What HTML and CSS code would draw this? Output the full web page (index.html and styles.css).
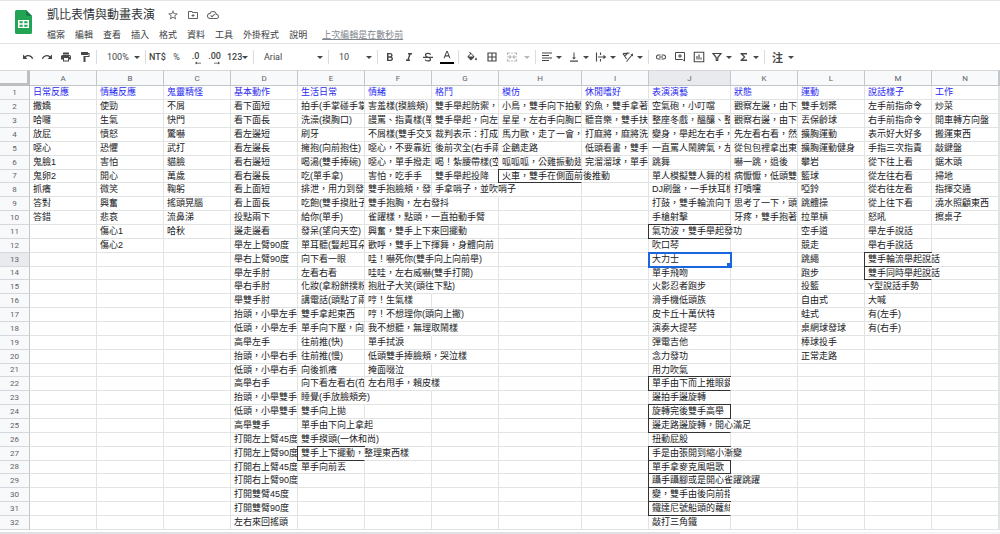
FILE: index.html
```html
<!DOCTYPE html>
<html lang="zh-Hant">
<head>
<meta charset="utf-8">
<title>凱比表情與動畫表演</title>
<link rel="stylesheet" href="styles.css">
</head>
<body>
<svg class="defs" aria-hidden="true">
  <symbol id="arrow" viewBox="0 0 6 3"><path d="M0 0h6L3 3z"/></symbol>
</svg>
<header class="header">
  <svg class="logo" viewBox="0 0 17 24" aria-label="試算表">
    <path fill="#23a455" d="M1.500 0H11l6 6v16.500a1.500 1.500 0 0 1-1.500 1.500h-14A1.500 1.500 0 0 1 0 22.500v-21A1.500 1.500 0 0 1 1.500 0z"/>
    <path fill="#158043" d="M11 0l6 6h-4.500A1.500 1.500 0 0 1 11 4.500z"/>
    <path fill="#fff" fill-rule="evenodd" d="M3 10h11v8H3zM4.500 11.300v1.900h3.200v-1.900zM9.200 11.300v1.900h3.300v-1.900zM4.500 14.700v2h3.200v-2zM9.200 14.700v2h3.300v-2z"/>
  </svg>
  <div class="heading">
    <div class="title-row">
      <h1 class="title">凱比表情與動畫表演</h1>
      <button class="title-btn" aria-label="加上星號"><svg viewBox="0 0 24 24"><path d="M22 9.240l-7.190-.620L12 2 9.190 8.630 2 9.240l5.460 4.730L5.820 21 12 17.270 18.180 21l-1.630-7.030zM12 15.400l-3.760 2.270 1-4.280-3.320-2.880 4.380-.380L12 6.100l1.710 4.040 4.380.380-3.320 2.880 1 4.280z"/></svg></button>
      <button class="title-btn" aria-label="移動"><svg viewBox="0 0 24 24"><path d="M20 6h-8l-2-2H4c-1.100 0-2 .900-2 2v12c0 1.100.900 2 2 2h16c1.100 0 2-.900 2-2V8c0-1.100-.900-2-2-2zm0 12H4V6h5.200l2 2H20zM11 16h2v-2h2v-2h-2v-2h-2v2H9v2h2z"/></svg></button>
      <button class="title-btn" aria-label="文件狀態"><svg viewBox="0 0 24 24"><path d="M19.350 10.040A7.490 7.490 0 0 0 12 4C9.110 4 6.600 5.640 5.350 8.040A5.994 5.994 0 0 0 0 14c0 3.310 2.690 6 6 6h13c2.760 0 5-2.240 5-5 0-2.640-2.050-4.780-4.650-4.960zM19 18H6c-2.210 0-4-1.790-4-4s1.790-4 4-4h.700A5.500 5.500 0 0 1 17.500 11.500v.500H19c1.660 0 3 1.340 3 3s-1.340 3-3 3zm-9-3.820l-2.090-2.090L6.500 13.500 10 17l6-6-1.400-1.400z"/></svg></button>
    </div>
    <nav class="menu">
      <button>檔案</button><button>編輯</button><button>查看</button><button>插入</button><button>格式</button><button>資料</button><button>工具</button><button>外掛程式</button><button>說明</button>
      <a class="last-edit" href="#history">上次編輯是在數秒前</a>
    </nav>
  </div>
</header>
<div class="toolbar" role="toolbar">
  <button class="tool" aria-label="復原"><svg viewBox="0 0 24 24"><path d="M12.500 8c-2.650 0-5.050.990-6.900 2.600L2 7v9h9l-3.620-3.620A7.980 7.980 0 0 1 20.120 16l2.370-.780A10.500 10.500 0 0 0 12.500 8z"/></svg></button>
  <button class="tool" aria-label="重做"><svg viewBox="0 0 24 24"><path d="M18.400 10.600A10.480 10.480 0 0 0 1.510 15.220L3.880 16a8 8 0 0 1 12.740-3.620L13 16h9V7z"/></svg></button>
  <button class="tool" aria-label="列印"><svg viewBox="0 0 24 24"><path fill-rule="evenodd" d="M19 8H5a3 3 0 0 0-3 3v6h4v4h12v-4h4v-6a3 3 0 0 0-3-3zm-3 11H8v-5h8zM19 12a1 1 0 1 1 0-2 1 1 0 0 1 0 2zM18 3H6v4h12z"/></svg></button>
  <button class="tool" aria-label="複製格式"><svg viewBox="0 0 24 24"><path d="M18 4V3a1 1 0 0 0-1-1H5a1 1 0 0 0-1 1v4a1 1 0 0 0 1 1h12a1 1 0 0 0 1-1V6h1v4H9v11a1 1 0 0 0 1 1h2a1 1 0 0 0 1-1v-9h8V4z"/></svg></button>
  <span class="sep"></span>
  <label class="picker"><select aria-label="縮放"><option>100%</option></select><svg class="arrow"><use href="#arrow"/></svg></label>
  <span class="sep"></span>
  <button class="tool strong">NT$</button>
  <button class="tool">%</button>
  <button class="tool strong dec" aria-label="減少小數位數">.0<svg viewBox="0 0 8 4"><path d="M2.500 0v1.500H8v1H2.500V4L0 2z"/></svg></button>
  <button class="tool strong dec" aria-label="增加小數位數">.00<svg viewBox="0 0 8 4"><path d="M5.500 0v1.500H0v1h5.500V4L8 2z"/></svg></button>
  <button class="tool drop strong">123<svg class="arrow"><use href="#arrow"/></svg></button>
  <span class="sep"></span>
  <label class="picker font"><select aria-label="字型"><option>Arial</option></select><svg class="arrow"><use href="#arrow"/></svg></label>
  <span class="sep"></span>
  <label class="picker"><select aria-label="字型大小"><option>10</option></select><svg class="arrow"><use href="#arrow"/></svg></label>
  <span class="sep"></span>
  <button class="tool" aria-label="粗體"><svg viewBox="0 0 24 24"><path fill-rule="evenodd" d="M15.600 11.800c1-.700 1.650-1.800 1.650-2.800C17.250 6.740 15.500 4 12.500 4H6v16h7.600c2.600 0 4.400-2 4.400-4.300 0-1.700-1-3.200-2.400-3.900zM9 6.500h3.500a1.700 1.700 0 0 1 0 3.800H9zm4 11H9v-4.200h4a2.100 2.100 0 0 1 0 4.200z"/></svg></button>
  <button class="tool" aria-label="斜體"><svg viewBox="0 0 24 24"><path d="M10 4v3h2.210l-3.420 10H6v3h8v-3h-2.210l3.420-10H18V4z"/></svg></button>
  <button class="tool" aria-label="刪除線"><svg viewBox="0 0 24 24"><path fill="none" stroke="currentColor" stroke-width="2.500" d="M2 12.500h20M17 7.500C16.500 3.500 7 3.500 7 8c0 2 2 3.500 5 4.500 3 .800 5 1.800 5 4 0 4.500-10 4.500-10.500.500"/></svg></button>
  <button class="tool color" aria-label="文字顏色"><svg viewBox="0 0 24 24"><path fill-rule="evenodd" d="M10.600 2L4.500 18H7l1.500-4h7l1.500 4h2.500L13.400 2zM9.300 11.700L12 4.500l2.700 7.200z"/></svg></button>
  <span class="sep"></span>
  <button class="tool fill" aria-label="填滿顏色"><svg viewBox="0 0 24 24"><path fill-rule="evenodd" d="M15.500 9.500L7.600 1.600 6.200 3l2.400 2.400-5.200 5.100a1.500 1.500 0 0 0 0 2.100l5.500 5.500a1.500 1.500 0 0 0 2.100 0l5.500-5.500c.600-.600.600-1.500-1-3.100zM5.200 11L10 6.200l4.800 4.800zM20 13s-2 2.200-2 3.500a2 2 0 0 0 4 0C22 15.200 20 13 20 13z"/></svg></button>
  <button class="tool" aria-label="框線"><svg viewBox="0 0 24 24"><path fill="none" stroke="currentColor" stroke-width="2.300" d="M4 4h16v16H4zM12 4v16M4 12h16"/></svg></button>
  <button class="tool drop merge" aria-label="合併儲存格" disabled><svg viewBox="0 0 24 24"><path fill="none" stroke="currentColor" stroke-width="2.300" d="M3 8V4h5M10 4h4M16 4h5v4M3 16v4h5M10 20h4M16 20h5v-4M2 12h7M22 12h-7M7 9l3 3-3 3M17 9l-3 3 3 3"/></svg><svg class="arrow"><use href="#arrow"/></svg></button>
  <span class="sep"></span>
  <button class="tool drop" aria-label="水平對齊"><svg viewBox="0 0 24 24"><path fill="none" stroke="currentColor" stroke-width="2.200" d="M2 4h20M2 9h14M2 14h20M2 19h14"/></svg><svg class="arrow"><use href="#arrow"/></svg></button>
  <button class="tool drop" aria-label="垂直對齊"><svg viewBox="0 0 24 24"><path d="M16 13h-3V3h-2v10H8l4 4zM4 19v2.300h16V19z"/></svg><svg class="arrow"><use href="#arrow"/></svg></button>
  <button class="tool drop" aria-label="文字換行"><svg viewBox="0 0 24 24"><path fill="none" stroke="currentColor" stroke-width="2.200" d="M3 3v18M11 3v5M11 16v5M6 12h13"/><path d="M17 7.500l5.500 4.500-5.500 4.500z"/></svg><svg class="arrow"><use href="#arrow"/></svg></button>
  <button class="tool drop" aria-label="文字旋轉"><svg viewBox="0 0 24 24"><path fill="none" stroke="currentColor" stroke-width="2.200" d="M2 5l13-1M2 5l7 11M5 10l7-6M9 21L20 8"/><path d="M22 5v6l-5-4z"/></svg><svg class="arrow"><use href="#arrow"/></svg></button>
  <span class="sep"></span>
  <button class="tool" aria-label="插入連結"><svg viewBox="0 0 24 24"><path d="M3.900 12A3.100 3.100 0 0 1 7 8.900h4V7H7a5 5 0 0 0 0 10h4v-1.900H7A3.100 3.100 0 0 1 3.900 12zM8 13h8v-2H8zm9-6h-4v1.900h4a3.100 3.100 0 0 1 0 6.200h-4V17h4a5 5 0 0 0 0-10z"/></svg></button>
  <button class="tool" aria-label="插入註解"><svg viewBox="0 0 24 24"><path fill="none" stroke="currentColor" stroke-width="2" d="M3 3h18v17l-4-3H3zM12 6v8M8 10h8"/></svg></button>
  <button class="tool" aria-label="插入圖表"><svg viewBox="0 0 24 24"><path fill="none" stroke="currentColor" stroke-width="2.200" d="M2.500 2.500h19v19h-19zM8 10v7M12 7v10M16 13v4"/></svg></button>
  <button class="tool drop" aria-label="篩選器"><svg viewBox="0 0 24 24"><path fill="none" stroke="currentColor" stroke-width="2.400" d="M4 5h16l-6.500 8v6h-3v-6z"/></svg><svg class="arrow"><use href="#arrow"/></svg></button>
  <button class="tool drop" aria-label="函式"><svg viewBox="0 0 24 24"><path d="M18 4H5v2l6.500 6L5 18v2h13v-3h-8l5-5-5-5h8z"/></svg><svg class="arrow"><use href="#arrow"/></svg></button>
  <span class="sep"></span>
  <button class="tool drop ime">注<svg class="arrow"><use href="#arrow"/></svg></button>
</div>
<main class="sheet">
  <table class="grid" id="grid"></table>
  <div class="scrollbar"><div class="thumb"></div></div>
</main>
<script src="sheet.js"></script>
</body>
</html>
```

FILE: styles.css
```css
* { box-sizing: border-box; }

body {
  margin: 0;
  min-height: 100vh;
  overflow: hidden;
  background: #fff;
  color: #3c4043;
  font-family: "Liberation Sans", "Noto Sans CJK TC", sans-serif;
  font-size: 9px;
}

button, select {
  margin: 0;
  padding: 0;
  border: 0;
  background: none;
  color: inherit;
  font: inherit;
}

svg { display: block; fill: currentColor; }
.defs { display: none; }

.header {
  display: flex;
  gap: 15px;
  padding: 6px 15px 1px;
  border-top: 1px solid #e3e4e6;
  border-bottom: 1px solid #e0e2e5;
}
.logo { width: 17px; height: 24px; margin-top: 3px; }
.title-row { display: flex; align-items: center; gap: 8px; height: 16px; }
.title {
  margin: 0 4px 0 0;
  font-size: 12px;
  font-weight: 400;
  line-height: 16px;
  color: #303336;
}
.title-btn { width: 12px; height: 12px; color: #5f6368; }
.title-btn svg { width: 12px; height: 12px; }
.menu { display: flex; gap: 10px; margin-top: 5px; line-height: 14px; white-space: nowrap; }
.last-edit { margin-left: 5px; color: #80868b; }

.toolbar {
  display: flex;
  align-items: center;
  height: 26px;
  padding-left: 18px;
  color: #444746;
  font-family: Roboto, "Noto Sans CJK TC", sans-serif;
  white-space: nowrap;
}
.sep { flex: none; width: 1px; height: 14px; margin: 0 2px; background: #dadce0; }
.tool {
  flex: none;
  display: flex;
  align-items: center;
  justify-content: center;
  width: 19px;
  height: 20px;
}
.tool svg { width: 12px; height: 12px; }
.tool .arrow, .arrow { flex: none; width: 6px; height: 3px; }
.strong { font-weight: 500; }
.dec { flex-direction: column; align-items: center; line-height: 9px; padding-top: 3px; }
.dec svg { width: 6px; height: 4px; align-self: flex-end; margin-right: 4px; }
.drop { justify-content: space-between; width: 27px; padding: 0 3px; }
.merge { width: 32px; padding-left: 5px; color: #b4b7ba; }
.color svg { padding-bottom: 1px; border-bottom: 0; }
.color { flex-direction: column; }
.color::after { content: ""; width: 14px; height: 2px; background: #000; }
.fill { width: 21px; }
.ime { width: 30px; padding-left: 5px; font-size: 11px; font-weight: 700; }
.picker { flex: none; display: flex; align-items: center; width: 44px; padding: 0 3px 0 8px; }
.picker select { flex: 1; min-width: 0; appearance: none; outline: 0; }
.font { width: 70px; }

.grid {
  width: 100%;
  table-layout: fixed;
  border-collapse: separate;
  border-spacing: 0;
  line-height: 13px;
  white-space: nowrap;
  color: #202124;
}
.col { width: 67px; }
.col-head { width: 30px; }
.col-h { width: 83px; }
.col-j { width: 82px; }
.col-rest { width: auto; }

.grid th {
  padding: 0;
  border-right: 1px solid #c4c7c9;
  border-bottom: 1px solid #d5d7da;
  background: #f8f9fa;
  color: #5f6368;
  font-family: Roboto, sans-serif;
  font-size: 8px;
  font-weight: 400;
  text-align: center;
}
.grid thead th { height: 16px; border-top: 1px solid #d5d7da; border-bottom-color: #c4c7c9; }
.grid thead .corner { border-right: 3px solid #bcbec0; border-bottom: 3px solid #bcbec0; }
.grid .active { background: #e8eaed; }
.grid tbody tr { height: 14px; }
.grid tbody tr:nth-child(7n) { height: 13px; line-height: 12px; }
.grid td {
  padding: 0 0 0 3px;
  border-right: 1px solid #e2e3e3;
  border-bottom: 1px solid #e2e3e3;
}
.grid tbody tr:first-child td { color: #2a2af0; }
.grid .clip { overflow: hidden; }
.grid .open { border-right-color: transparent; }
.grid .boxed { border-bottom-color: #333; box-shadow: -1px 0 #333, 0 -1px #333, -1px -1px #333; }
.grid .closed { border-right-color: #333; }
.grid .selected { position: relative; outline: 2px solid #1a66e0; outline-offset: -1px; }
.grid .selected::after {
  content: "";
  position: absolute;
  right: -2px;
  bottom: -2px;
  width: 5px;
  height: 5px;
  background: #1a66e0;
}

.scrollbar { margin-top: 2px; height: 4px; background: #f3f4f6; }
.thumb { width: 68%; height: 4px; background: #dfe1e4; }
```

FILE: sheet.js
```javascript
const columns = {
  A: "日常反應|撒嬌|哈囉|放屁|噁心|鬼臉1|鬼卵2|抓癢|答對|答錯",
  B: "情緒反應|使勁|生氣|憤怒|恐懼|害怕|開心|微笑|興奮|悲哀|傷心1|傷心2",
  C: "鬼靈精怪|不屑|快門|驚嚇|武打|貓臉|萬歲|鞠躬|搖頭晃腦|流鼻涕|哈秋",
  D: "基本動作|看下面短|看下面長|看左邊短|看左邊長|看右邊短|看右邊長|看上面短|看上面長|投點兩下|邊走邊看|舉左上臂90度|舉右上臂90度|舉左手肘|舉右手肘|舉雙手肘|抬頭，小舉左手往|低頭，小舉左手往|高舉左手|抬頭，小舉右手往|低頭，小舉右手往|高舉右手|抬頭，小舉雙手往|低頭，小舉雙手往|高舉雙手|打開左上臂45度|打開左上臂90度|打開右上臂45度|打開右上臂90度|打開雙臂45度|打開雙臂90度|左右來回搖頭",
  E: "生活日常|拍手(手掌碰手掌|洗澡(摸胸口)|刷牙|擁抱(向前抱住)|喝湯(雙手捧碗)|吃(單手拿)|排泄，用力到發抖|吃飽(雙手摸肚子|給你(單手)|發呆(望向天空)|單耳聽(豎起耳朵|向下看一眼|左看右看|化妝(拿粉餅撲粉|講電話(頭點了兩|雙手拿起東西|單手向下壓，向下|往前推(快)|往前推(慢)|向後抓癢|向下看左看右(在|睡覺(手放臉頰旁)|雙手向上拋|單手由下向上拿起|雙手摸頭(一休和尚)|雙手上下擺動，整理東西樣|單手向前丟",
  F: "情緒|害羞樣(摸臉頰)|謾罵、指責樣(單|不屑樣(雙手交叉|噁心，不要靠近我|噁心，單手撥走|害怕，吃手手|雙手抱臉頰，發抖|雙手抱胸，左右發抖|雀躍樣，點頭，一直拍動手臂|興奮，雙手上下來回擺動|歡呼，雙手上下揮舞，身體向前|哇！嚇死你(雙手向上向前舉)|哇哇，左右威嚇(雙手打開)|抱肚子大笑(頭往下點)|哼！生氣樣|哼！不想理你(頭向上撇)|我不想聽，無理取鬧樣|單手拭淚|低頭雙手捧臉頰，哭泣樣|掩面啜泣|左右甩手，賴皮樣",
  G: "格鬥|雙手舉起防禦，身|雙手舉起，向左閃|裁判表示：打成平|後前次全(右手兩|喝！紮腰帶樣(空|雙手舉起投降|手拿哨子，並吹哨子",
  H: "模仿|小鳥，雙手向下拍動翅|星星，左右手向胸口|馬力歐，走了一會，跳|企鵝走路|呱呱呱，公雞振動翅膀|火車，雙手在側面前後推動",
  I: "休閒嗜好|釣魚，雙手拿著釣|聽音樂，雙手扶耳|打麻將，麻將洗牌|低頭看書，雙手拿|完溜溜球，單手甩",
  J: "表演演藝|空氣砲，小叮噹|整座冬戲，醞釀、整|變身，舉起左右手，|一直罵人鬧脾氣，左|跳舞|單人模擬雙人舞的樣|DJ刷盤，一手扶耳機|打鼓，雙手輪流向下|手槍射擊|氣功波，雙手舉起發功|吹口琴|大力士|單手飛吻|火影忍者跑步|滑手機低頭族|皮卡丘十萬伏特|演奏大提琴|彈電吉他|念力發功|用力吹氣|單手由下而上推眼鏡|邊拍手邊旋轉|旋轉完後雙手高舉|邊走路邊旋轉，開心滿足|扭動屁股|手是由張開到縮小漸變|單手拿麥克風唱歌|躡手躡腳或是開心雀躍跳躍|變，雙手由後向前指|鐵達尼號船頭的蘿絲|敲打三角鐵",
  K: "狀態|觀察左邊，由下往|觀察右邊，由下往|先左看右看，然後|從包包裡拿出東西|嚇一跳，退後|病懨懨，低頭雙手|打噴嚏|思考了一下，頭往|牙疼，雙手抱著臉",
  L: "運動|雙手划槳|丟保齡球|擴胸運動|擴胸運動健身|攀岩|籃球|啞鈴|跳體操|拉單槓|空手道|競走|跳繩|跑步|投籃|自由式|蛙式|桌網球發球|棒球投手|正常走路",
  M: "說話樣子|左手前指命令|右手前指命令|表示好大好多|手指三次指責|從下往上看|從左往右看|從右往左看|從上往下看|怒吼|舉左手說話|舉右手說話|雙手輪流舉起說話|雙手同時舉起說話|Y型說話手勢|大喊|有(左手)|有(右手)",
  N: "工作|炒菜|開車轉方向盤|搬運東西|敲鍵盤|鋸木頭|掃地|指揮交通|澆水照顧東西|擦桌子"
};
const rowCount = 32;
const activeCol = "J";
const activeRow = 13;
const boxed = ["H7", "J11", "J22", "J24", "J25", "J27", "J28", "J29", "J30", "J31", "E27", "M13", "M14"];
const closed = ["J24", "J28"];
const clipped = ["J22", "J30", "J31"];

const letters = Object.keys(columns);
const data = letters.map((c) => columns[c].split("|"));
const table = document.getElementById("grid");

const add = (parent, tag, className, text) => {
  const el = document.createElement(tag);
  if (className) el.className = className;
  if (text) el.textContent = text;
  parent.appendChild(el);
  return el;
};

const group = add(table, "colgroup");
add(group, "col", "col-head");
letters.forEach((c) => add(group, "col", c === "H" ? "col-h" : c === "J" ? "col-j" : "col"));
add(group, "col", "col-rest");

const head = add(add(table, "thead"), "tr");
add(head, "th", "corner");
letters.forEach((c) => add(head, "th", c === activeCol ? "active" : "", c));
add(head, "th");

const body = add(table, "tbody");
for (let r = 1; r <= rowCount; r++) {
  const tr = add(body, "tr");
  add(tr, "th", r === activeRow ? "active" : "", String(r));
  let reach = 0;
  letters.forEach((c, i) => {
    const text = data[i][r - 1] || "";
    const next = data[i + 1] && data[i + 1][r - 1];
    const id = c + r;
    const width = c === "H" ? 83 : c === "J" ? 82 : 67;
    const classes = [];
    if (text) {
      reach = 3;
      for (const ch of text) reach += ch.charCodeAt(0) < 256 ? 4 : 9;
    }
    if (next || clipped.includes(id)) {
      classes.push("clip");
      reach = Math.min(reach, width);
    }
    if (reach > width || clipped.includes(id)) classes.push("open");
    reach = Math.max(0, reach - width);
    if (boxed.includes(id)) classes.push("boxed");
    if (closed.includes(id)) classes.push("closed");
    if (c === activeCol && r === activeRow) classes.push("selected");
    add(tr, "td", classes.join(" "), text);
  });
  add(tr, "td");
}
```
